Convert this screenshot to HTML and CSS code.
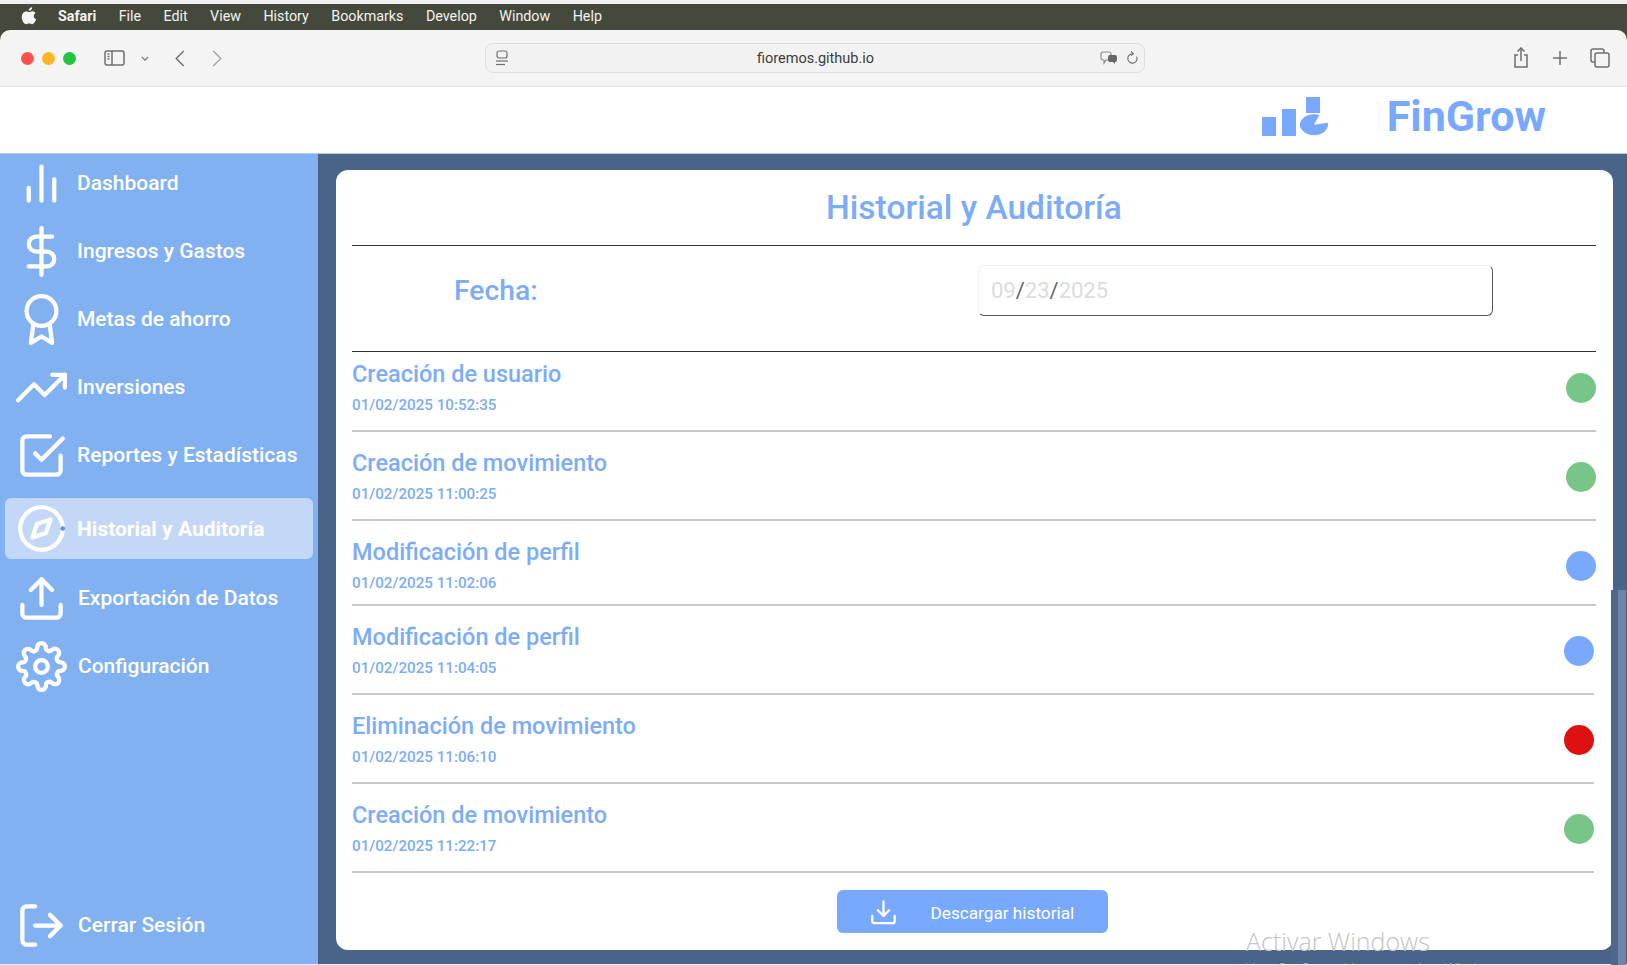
FILE: index.html
```html
<!DOCTYPE html>
<html>
<head>
    <meta charset="utf-8">
    <title>FinGrow</title>
    <link rel="stylesheet" href="styles.css">
</head>
<body>
<div class="menubar">
    <svg class="apple" viewBox="0 0 20 24"><path d="M14 1c.2 2.300-2 4.700-4.400 4.500C9.400 3.300 11.700 1.100 14 1zM10 7c1.200 0 2.300-1 4.200-1 1.400 0 3 .7 4 2.200-3.300 2-2.800 6.600.8 8-.9 2.400-2.800 6-5 6-1.500 0-2-.9-3.800-.9s-2.400.9-3.800.9C3.600 22.200 1 17.500 1 13.500 1 9 3.800 6.300 6.300 6.300 7.900 6.300 9 7 10 7z"/></svg>
    <span class="menu-item menu-app">Safari</span>
    <span class="menu-item">File</span>
    <span class="menu-item">Edit</span>
    <span class="menu-item">View</span>
    <span class="menu-item">History</span>
    <span class="menu-item">Bookmarks</span>
    <span class="menu-item">Develop</span>
    <span class="menu-item">Window</span>
    <span class="menu-item">Help</span>
</div>
<div class="toolbar-wrap">
<div class="toolbar">
    <div class="tool-left">
        <i class="light light-red"></i>
        <i class="light light-yellow"></i>
        <i class="light light-green"></i>
        <svg class="tb-sidebar" viewBox="0 0 21 16"><rect x="1" y="1" width="19" height="14" rx="2"/><line x1="8" y1="1" x2="8" y2="15"/><line x1="3.500" y1="4" x2="5.500" y2="4"/><line x1="3.500" y1="6.500" x2="5.500" y2="6.500"/><line x1="3.500" y1="9" x2="5.500" y2="9"/></svg>
        <svg class="tb-chevron" viewBox="0 0 10 6"><polyline points="1,1 5,5 9,1"/></svg>
        <svg class="tb-back" viewBox="0 0 10 18"><polyline points="9,1 1,9 9,17"/></svg>
        <svg class="tb-forward" viewBox="0 0 10 18"><polyline points="1,1 9,9 1,17"/></svg>
    </div>
    <div class="address">
        <svg class="addr-page" viewBox="0 0 14 16"><rect x="2" y="1" width="10" height="7" rx="2"/><line x1="1" y1="11" x2="13" y2="11"/><line x1="1" y1="14.500" x2="10" y2="14.500"/></svg>
        <span class="addr-url">fioremos.github.io</span>
        <svg class="addr-translate" viewBox="0 0 18 14"><path d="M3 1h6a2 2 0 0 1 2 2v4a2 2 0 0 1-2 2H6l-2 3V9H3a2 2 0 0 1-2-2V3a2 2 0 0 1 2-2z" fill="none" stroke="#8a8a8a"/><path d="M10 4h5a2 2 0 0 1 2 2v3a2 2 0 0 1-2 2v2l-2-2h-3a2 2 0 0 1-2-2V6a2 2 0 0 1 2-2z" fill="#666"/></svg>
        <svg class="addr-reload" viewBox="0 0 14 16"><path d="M11.500 6.500A5 5 0 1 1 7 3.500"/><polyline points="5.500,1 8,3.500 5.500,5.500"/></svg>
    </div>
    <div class="tool-right">
        <svg class="tb-share" viewBox="0 0 16 22"><path d="M5 8H2v12h12V8h-3"/><line x1="8" y1="1" x2="8" y2="14"/><polyline points="4.500,4.500 8,1 11.500,4.500"/></svg>
        <svg class="tb-plus" viewBox="0 0 14 14"><line x1="7" y1="0" x2="7" y2="14"/><line x1="0" y1="7" x2="14" y2="7"/></svg>
        <svg class="tb-tabs" viewBox="0 0 20 20"><rect x="5" y="5" width="14" height="14" rx="2"/><path d="M5 14H3a2 2 0 0 1-2-2V3a2 2 0 0 1 2-2h9a2 2 0 0 1 2 2v2"/></svg>
    </div>
</div>
</div>
<header class="topbar">
    <svg class="logo" viewBox="0 0 66 39"><rect x="0" y="20" width="14" height="19"/><rect x="20" y="12" width="14" height="27"/><rect x="44" y="0" width="14" height="16"/><path d="M52 27.700L57.300 18A14 10.500 0 1 0 65.700 25.700Z"/></svg>
    <span class="brand">FinGrow</span>
</header>
<div class="layout">
    <nav class="sidebar">
        <a class="nav-item">
            <svg class="nav-icon" viewBox="0 0 24 24"><line x1="18" y1="20" x2="18" y2="10"/><line x1="12" y1="20" x2="12" y2="4"/><line x1="6" y1="20" x2="6" y2="14"/></svg>
            Dashboard
        </a>
        <a class="nav-item">
            <svg class="nav-icon" viewBox="0 0 24 24"><line x1="12" y1="1" x2="12" y2="23"/><path d="M17 5H9.500a3.500 3.500 0 0 0 0 7h5a3.500 3.500 0 0 1 0 7H6"/></svg>
            Ingresos y Gastos
        </a>
        <a class="nav-item">
            <svg class="nav-icon" viewBox="0 0 24 24"><circle cx="12" cy="8" r="7"/><polyline points="8.210 13.890 7 23 12 20 17 23 15.790 13.880"/></svg>
            Metas de ahorro
        </a>
        <a class="nav-item">
            <svg class="nav-icon" viewBox="0 0 24 24"><polyline points="23 6 13.500 15.500 8.500 10.500 1 18"/><polyline points="17 6 23 6 23 12"/></svg>
            Inversiones
        </a>
        <a class="nav-item">
            <svg class="nav-icon" viewBox="0 0 24 24"><polyline points="9 11 12 14 22 4"/><path d="M21 12v7a2 2 0 0 1-2 2H5a2 2 0 0 1-2-2V5a2 2 0 0 1 2-2h11"/></svg>
            Reportes y Estadísticas
        </a>
        <a class="nav-item nav-active">
            <svg class="nav-icon" viewBox="0 0 24 24"><circle cx="12" cy="12" r="10"/><polygon points="16.240 7.760 14.120 14.120 7.760 16.240 9.880 9.880 16.240 7.760"/><circle class="nav-dot" cx="22" cy="12" r="1.100"/></svg>
            Historial y Auditoría
        </a>
        <a class="nav-item nav-low">
            <svg class="nav-icon" viewBox="0 0 24 24"><path d="M21 15v4a2 2 0 0 1-2 2H5a2 2 0 0 1-2-2v-4"/><polyline points="17 8 12 3 7 8"/><line x1="12" y1="3" x2="12" y2="15"/></svg>
            Exportación de Datos
        </a>
        <a class="nav-item nav-low">
            <svg class="nav-icon" viewBox="0 0 24 24"><circle cx="12" cy="12" r="3"/><path d="M19.400 15a1.650 1.650 0 0 0 .33 1.820l.06.06a2 2 0 0 1 0 2.830 2 2 0 0 1-2.830 0l-.06-.06a1.650 1.650 0 0 0-1.820-.33 1.650 1.650 0 0 0-1 1.510V21a2 2 0 0 1-2 2 2 2 0 0 1-2-2v-.09A1.650 1.650 0 0 0 9 19.400a1.650 1.650 0 0 0-1.820.33l-.06.06a2 2 0 0 1-2.830 0 2 2 0 0 1 0-2.830l.06-.06a1.650 1.650 0 0 0 .33-1.820 1.650 1.650 0 0 0-1.510-1H3a2 2 0 0 1-2-2 2 2 0 0 1 2-2h.09A1.650 1.650 0 0 0 4.600 9a1.650 1.650 0 0 0-.33-1.820l-.06-.06a2 2 0 0 1 0-2.830 2 2 0 0 1 2.830 0l.06.06a1.650 1.650 0 0 0 1.820.33H9a1.650 1.650 0 0 0 1-1.510V3a2 2 0 0 1 2-2 2 2 0 0 1 2 2v.09a1.650 1.650 0 0 0 1 1.510 1.650 1.650 0 0 0 1.820-.33l.06-.06a2 2 0 0 1 2.830 0 2 2 0 0 1 0 2.830l-.06.06a1.650 1.650 0 0 0-.33 1.820V9a1.650 1.650 0 0 0 1.510 1H21a2 2 0 0 1 2 2 2 2 0 0 1-2 2h-.09a1.650 1.650 0 0 0-1.510 1z"/></svg>
            Configuración
        </a>
        <a class="nav-item nav-low nav-logout">
            <svg class="nav-icon" viewBox="0 0 24 24"><path d="M9 21H5a2 2 0 0 1-2-2V5a2 2 0 0 1 2-2h4"/><polyline points="16 17 21 12 16 7"/><line x1="21" y1="12" x2="9" y2="12"/></svg>
            Cerrar Sesión
        </a>
    </nav>
    <main class="content">
        <section class="card">
            <h1 class="card-title">Historial y Auditoría</h1>
            <div class="filter">
                <label class="filter-label">Fecha:</label>
                <div class="date-input">
                    <span>09</span><b>/</b><span>23</span><b>/</b><span>2025</span>
                </div>
            </div>
            <ul class="log">
                <li class="log-row log-first">
                    <div><div class="log-name">Creación de usuario</div><div class="log-date">01/02/2025 10:52:35</div></div>
                    <i class="dot dot-green"></i>
                </li>
                <li class="log-row">
                    <div><div class="log-name">Creación de movimiento</div><div class="log-date">01/02/2025 11:00:25</div></div>
                    <i class="dot dot-green"></i>
                </li>
                <li class="log-row log-short">
                    <div><div class="log-name">Modificación de perfil</div><div class="log-date">01/02/2025 11:02:06</div></div>
                    <i class="dot dot-blue"></i>
                </li>
                <li class="log-row log-inset">
                    <div><div class="log-name">Modificación de perfil</div><div class="log-date">01/02/2025 11:04:05</div></div>
                    <i class="dot dot-blue"></i>
                </li>
                <li class="log-row log-inset">
                    <div><div class="log-name">Eliminación de movimiento</div><div class="log-date">01/02/2025 11:06:10</div></div>
                    <i class="dot dot-red"></i>
                </li>
                <li class="log-row log-inset">
                    <div><div class="log-name">Creación de movimiento</div><div class="log-date">01/02/2025 11:22:17</div></div>
                    <i class="dot dot-green"></i>
                </li>
            </ul>
            <div class="actions">
                <button class="download">
                    <svg viewBox="0 0 24 24"><path d="M22 15v4.500a2 2 0 0 1-2 2H4a2 2 0 0 1-2-2V15"/><polyline points="7 10 12 15 17 10"/><line x1="12" y1="15" x2="12" y2="2"/></svg>
                    <span>Descargar historial</span>
                </button>
            </div>
        </section>
    </main>
</div>
<div class="scroll-thumb"></div>
<div class="watermark">
    <div class="watermark-big">Activar Windows</div>
    <div class="watermark-small">Ve a Configuración para activar Windows.</div>
</div>
</body>
</html>
```

FILE: styles.css
```css
* {
    box-sizing: border-box;
}
html, body {
    margin: 0;
    height: 965px;
    overflow: hidden;
}
body {
    position: relative;
    display: flex;
    flex-direction: column;
    padding-top: 4px;
    background: #efefef;
    font-family: Roboto, "Liberation Sans", sans-serif;
}
.menubar {
    display: flex;
    align-items: center;
    flex: none;
    height: 26px;
    padding: 0 0 2px 21px;
    background: #45493b;
    color: #f2f2f0;
    font-size: 14.300px;
}
.apple {
    width: 16px;
    height: 20px;
    margin-right: 21px;
    fill: #f4f4f4;
}
.menu-item {
    margin-right: 22.400px;
}
.menu-app {
    font-weight: 700;
}
.toolbar-wrap {
    flex: none;
    background: #45493b;
}
.toolbar {
    display: flex;
    align-items: center;
    height: 57px;
    background: #f4f4f4;
    border-bottom: 1px solid #e2e2e2;
    border-radius: 10px 10px 0 0;
}
.toolbar svg {
    fill: none;
    stroke: #6f6f6f;
    stroke-width: 1.500;
}
.tool-left {
    display: flex;
    align-items: center;
    flex: none;
    width: 485px;
    padding-left: 21px;
}
.light {
    width: 13px;
    height: 13px;
    margin-right: 8px;
    border-radius: 50%;
}
.light-red { background: #fb5250; }
.light-yellow { background: #fdb528; }
.light-green { background: #25c33f; }
.tb-sidebar {
    width: 21px;
    height: 16px;
    margin-left: 20px;
}
.tb-chevron {
    width: 8px;
    height: 5px;
    margin-left: 16px;
}
.tb-back {
    width: 10px;
    height: 17px;
    margin-left: 26px;
}
.toolbar .tb-forward {
    width: 10px;
    height: 17px;
    margin-left: 27px;
    stroke: #a6a6a6;
}
.address {
    display: flex;
    align-items: center;
    flex: none;
    width: 660px;
    height: 30px;
    padding: 0 5px 0 9px;
    border: 1px solid #dedede;
    border-radius: 8px;
    background: #f2f2f2;
}
.address svg {
    stroke-width: 1.200;
}
.addr-page {
    width: 14px;
    height: 16px;
}
.addr-url {
    flex: 1;
    padding-left: 22px;
    font-size: 14.500px;
    color: #3c3c3c;
    text-align: center;
}
.addr-translate {
    width: 18px;
    height: 14px;
    margin-right: 8px;
}
.toolbar .addr-translate {
    stroke: none;
}
.addr-reload {
    width: 13px;
    height: 16px;
}
.tool-right {
    display: flex;
    align-items: center;
    margin-left: auto;
    padding-right: 17px;
}
.tb-share {
    width: 16px;
    height: 22px;
}
.tb-plus {
    width: 14px;
    height: 14px;
    margin-left: 24px;
}
.tb-tabs {
    width: 20px;
    height: 20px;
    margin-left: 23px;
}
.topbar {
    display: flex;
    align-items: center;
    justify-content: flex-end;
    flex: none;
    height: 66px;
    padding: 0 81px 8px 0;
    background: #fff;
}
.logo {
    width: 66px;
    height: 39px;
    margin-right: 59px;
    fill: #78a9ff;
}
.brand {
    color: #78a9ff;
    font-size: 43px;
    font-weight: 700;
}
.layout {
    display: flex;
    flex: 1;
    min-height: 0;
    margin-bottom: 1px;
    background: #4a6388;
    border-top: 1px solid #b9c8dd;
}
.sidebar {
    display: flex;
    flex-direction: column;
    gap: 10px;
    flex: none;
    width: 318px;
    padding: 0 5px 10px;
    background: #82b1f2;
}
.nav-item {
    display: flex;
    align-items: center;
    gap: 10px;
    height: 58px;
    padding-left: 11px;
    color: #fff;
    font-size: 21px;
    font-weight: 500;
}
.nav-icon {
    flex: none;
    width: 51px;
    height: 51px;
    fill: none;
    stroke: #fff;
    stroke-width: 2;
    stroke-linecap: round;
    stroke-linejoin: round;
}
.nav-dot {
    fill: #5b8ff0;
    stroke: none;
}
.nav-active {
    height: 61px;
    margin-top: 4px;
    border-radius: 6px;
    background: #c3d8f6;
    font-weight: 700;
}
.nav-low {
    gap: 11px;
}
.nav-logout {
    margin-top: auto;
}
.content {
    flex: 1;
    min-width: 0;
    padding: 16px 14px 14px 18px;
}
.card {
    display: flex;
    flex-direction: column;
    height: 100%;
    padding: 0 17px 0 16px;
    border-radius: 12px;
    background: #fff;
}
.card-title {
    flex: none;
    height: 76px;
    margin: 0;
    border-bottom: 1px solid #333;
    color: #7dacf7;
    font-size: 33.500px;
    font-weight: 500;
    line-height: 75px;
    text-align: center;
}
.filter {
    display: flex;
    align-items: center;
    flex: none;
    height: 106px;
    padding: 0 103px 17px 102px;
    border-bottom: 1px solid #333;
}
.filter-label {
    color: #7dacf7;
    font-size: 28.300px;
    font-weight: 500;
}
.date-input {
    width: 515px;
    height: 51px;
    margin-left: auto;
    padding-left: 12px;
    border: 1px solid;
    border-color: #f0f0f0 #555 #555 #f0f0f0;
    border-radius: 6px;
    color: #dcdcdc;
    font-size: 22px;
    line-height: 50px;
}
.date-input b {
    color: #666;
    font-weight: 400;
}
.log {
    flex: none;
    margin: 0;
    padding: 0;
    list-style: none;
}
.log-row {
    display: flex;
    align-items: center;
    justify-content: space-between;
    height: 89px;
    padding: 15px 0;
    border-bottom: 2px solid #c8c8c8;
}
.log-first {
    height: 80px;
    padding: 6px 0 15px;
}
.log-short {
    height: 85px;
    padding-bottom: 11px;
}
.log-inset {
    margin-right: 2px;
}
.log-name {
    color: #7dacf7;
    font-size: 23.500px;
    font-weight: 500;
}
.log-date {
    margin-top: 8px;
    color: #7dacf7;
    font-size: 15.200px;
    font-weight: 500;
}
.dot {
    width: 30px;
    height: 30px;
    margin-top: 2px;
    border-radius: 50%;
}
.dot-green { background: #77c687; }
.dot-blue { background: #78a9ff; }
.dot-red { background: #dd1111; }
.actions {
    display: flex;
    justify-content: center;
    padding: 17px 4px 0 0;
}
.download {
    display: flex;
    align-items: center;
    gap: 34px;
    width: 271px;
    height: 43px;
    padding: 2px 0 0 33px;
    border: 0;
    border-radius: 6px;
    background: #78a9ff;
    color: #fff;
    font-family: Roboto, "Liberation Sans", sans-serif;
    font-size: 17.200px;
}
.download svg {
    width: 27px;
    height: 27px;
    fill: none;
    stroke: #fff;
    stroke-width: 2;
    stroke-linecap: round;
    stroke-linejoin: round;
}
.scroll-thumb {
    position: absolute;
    right: 1px;
    top: 590px;
    bottom: 0;
    width: 15px;
    border-left: 7px solid #4f688e;
    background: #6e84a8;
}
.watermark {
    position: absolute;
    left: 1246px;
    top: 922px;
    color: #c4c4c4;
    font-family: "Open Sans", sans-serif;
    font-weight: 300;
    white-space: nowrap;
}
.watermark-big {
    font-size: 25px;
    line-height: 38px;
}
.watermark-small {
    font-size: 14px;
    line-height: 18px;
}
```
